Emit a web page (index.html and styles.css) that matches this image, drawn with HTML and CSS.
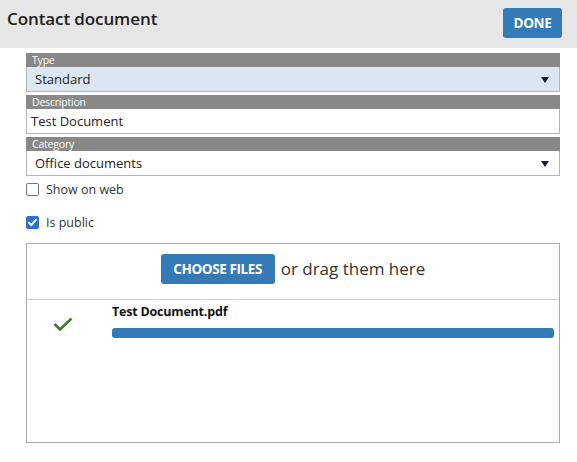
FILE: index.html
```html
<!DOCTYPE html>
<html>
<head>
<meta charset="utf-8">
<link rel="stylesheet" href="styles.css">
</head>
<body>
<div class="header">
  <div class="title">Contact document</div>
  <button class="btn done">DONE</button>
</div>
<div class="form">
  <div class="field">
    <div class="label">Type</div>
    <div class="control select blue"><span>Standard</span><span class="caret"></span></div>
  </div>
  <div class="field">
    <div class="label">Description</div>
    <div class="control input"><span>Test Document</span></div>
  </div>
  <div class="field">
    <div class="label">Category</div>
    <div class="control select"><span>Office documents</span><span class="caret"></span></div>
  </div>
  <label class="check"><span class="box"></span><span>Show on web</span></label>
  <label class="check checked"><span class="box"><svg viewBox="0 0 13 13" width="13" height="13"><path d="M3 6.8 L5.4 9.2 L10 3.8" fill="none" stroke="#fff" stroke-width="2" stroke-linecap="round" stroke-linejoin="round"/></svg></span><span>Is public</span></label>
  <div class="upload">
    <div class="drop">
      <button class="btn choose">CHOOSE FILES</button>
      <span class="drag">or drag them here</span>
    </div>
    <div class="file">
      <div class="status"><svg viewBox="0 0 20 14" width="20" height="14"><path d="M1.5 7 L7 12.5 L18.5 1.5" fill="none" stroke="#3f7a2e" stroke-width="2.6"/></svg></div>
      <div class="info">
        <div class="name">Test Document.pdf</div>
        <div class="bar"></div>
      </div>
    </div>
  </div>
</div>
</body>
</html>
```
FILE: styles.css
```css
* { box-sizing: border-box; }
body {
  margin: 0;
  font-family: "Open Sans", "Noto Sans", sans-serif;
  color: #222;
  background: #fff;
  width: 577px;
  height: 462px;
  overflow: hidden;
}
.header {
  background: #e6e6e6;
  height: 48px;
  display: flex;
  justify-content: space-between;
  align-items: flex-start;
  padding: 0 15px 0 7px;
}
.title {
  font-size: 17px;
  font-weight: 600;
  color: #222;
  margin-top: 7px;
  letter-spacing: -0.1px;
}
.btn {
  background: #337ab7;
  color: #fff;
  border: none;
  border-radius: 3px;
  font-family: "Open Sans", sans-serif;
  font-weight: 700;
  padding: 0;
  cursor: pointer;
}
.done {
  margin-top: 8px;
  width: 59px;
  height: 30px;
  font-size: 13.5px;
  letter-spacing: -0.3px;
}
.form {
  margin: 5px 17px 0 26px;
}
.field {
  margin-bottom: 3px;
}
.label {
  background: #888;
  color: #fff;
  font-size: 10.5px;
  line-height: 14px;
  height: 14px;
  padding-left: 6px;
  letter-spacing: -0.2px;
}
.control {
  height: 25px;
  border: 1px solid #b5b5b5;
  border-top: none;
  display: flex;
  align-items: center;
  justify-content: space-between;
  font-size: 13px;
  color: #222;
}
.select { padding: 0 10px 0 8px; }
.input { padding: 0 5px 0 4px; }
.blue { background: #dce6f0; }
.caret {
  width: 0;
  height: 0;
  border-left: 4px solid transparent;
  border-right: 4px solid transparent;
  border-top: 6px solid #1a1a2a;
  margin-top: 1px;
}
.check {
  display: flex;
  align-items: center;
  gap: 7px;
  font-size: 12.5px;
  color: #333;
  height: 15px;
}
.check:first-of-type { margin-top: 6px; }
.check + .check { margin-top: 18px; }
.box {
  width: 13px;
  height: 13px;
  border: 1px solid #767676;
  border-radius: 2px;
  background: #fff;
  display: flex;
}
.checked .box {
  background: #2e6fd6;
  border-color: #2e6fd6;
}
.checked .box svg { margin: -1px; }
.upload {
  margin-top: 13px;
  border: 1px solid #aaa;
  height: 200px;
}
.drop {
  height: 56px;
  border-bottom: 1px solid #d0d0d0;
  display: flex;
  justify-content: center;
  align-items: flex-start;
  gap: 6px;
  padding-top: 10px;
}
.choose {
  width: 114px;
  height: 30px;
  font-size: 13.5px;
  letter-spacing: -0.4px;
}
.drag {
  font-size: 17px;
  line-height: 30px;
  color: #333;
}
.file {
  display: flex;
  padding: 5px 5px 0 0;
}
.status {
  width: 85px;
  padding: 9px 0 0 26px;
}
.info { flex: 1; }
.name {
  font-size: 12.5px;
  font-weight: 700;
  color: #111;
  line-height: 14px;
  letter-spacing: -0.2px;
}
.bar {
  margin-top: 9px;
  height: 10px;
  background: #337ab7;
  border-radius: 3px;
}
```
